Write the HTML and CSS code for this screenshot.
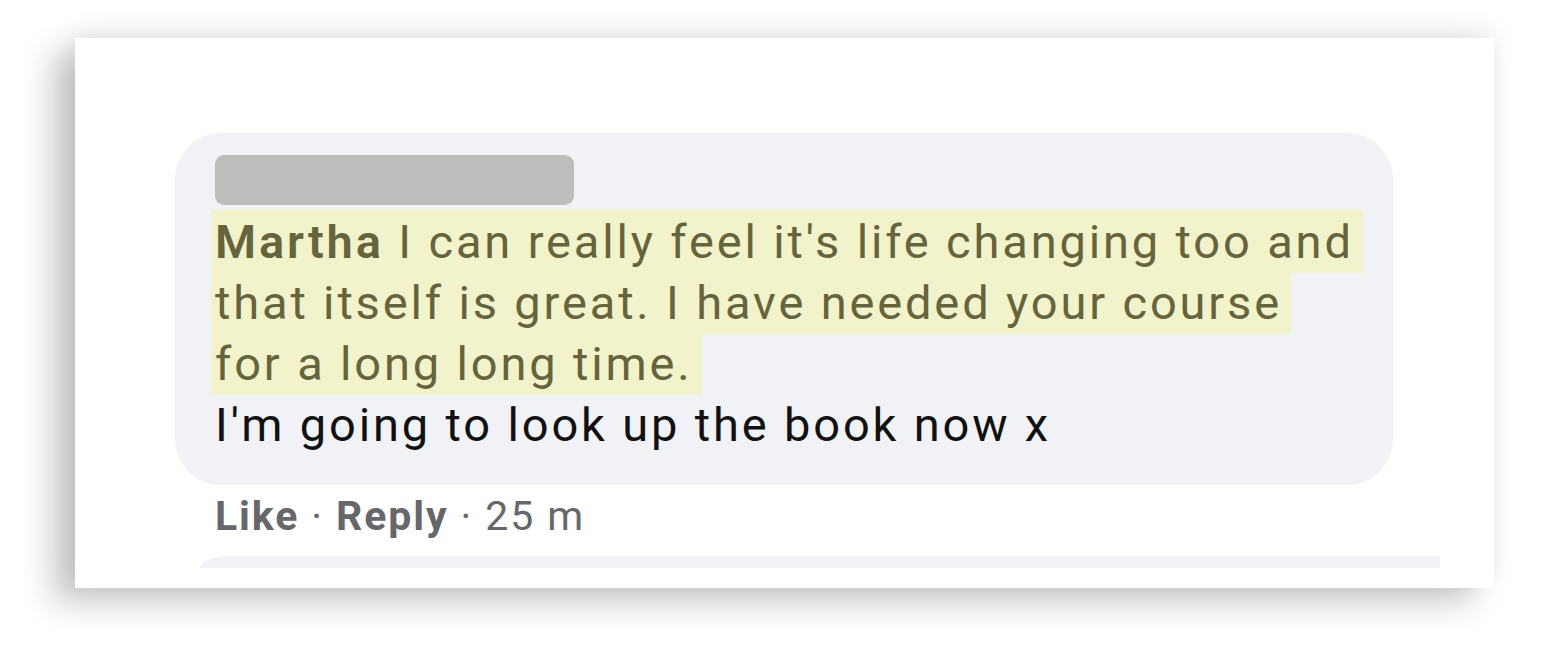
FILE: index.html
```html
<!DOCTYPE html>
<html>
<head>
<meta charset="utf-8">
<link rel="stylesheet" href="styles.css">
</head>
<body>
<div class="page">
  <div class="card">
    <div class="bubble">
      <div class="name-bar"></div>
      <p class="text"><span class="hl"><b>Martha</b> I can really feel it's life changing too and<br>that itself is great. I have needed your course<br>for a long long time.</span><br>I'm going to look up the book now x</p>
    </div>
    <div class="actions"><b>Like</b> · <b>Reply</b> · 25 m</div>
    <div class="next-bubble"></div>
  </div>
</div>
</body>
</html>
```
FILE: styles.css
```css
html, body {
  margin: 0;
  padding: 0;
  background: #ffffff;
}
.page {
  width: 1548px;
  height: 658px;
  padding: 38px 0 0 75px;
  box-sizing: border-box;
  overflow: hidden;
}
.card {
  width: 1419px;
  height: 550px;
  background: #ffffff;
  box-shadow: -22px 14px 30px rgba(0,0,0,0.22), 0 -8px 24px rgba(0,0,0,0.08);
  padding: 95px 0 0 100px;
  box-sizing: border-box;
  font-family: Roboto, "Liberation Sans", sans-serif;
}
.bubble {
  width: 1218px;
  height: 352px;
  box-sizing: border-box;
  background: #f0f2f5;
  border-radius: 46px;
  padding: 22px 0 0 40px;
}
.name-bar {
  width: 359px;
  height: 50px;
  background: #bdbdbd;
  border-radius: 9px;
}
.text {
  margin: 6px 0 0 0;
  font-size: 47px;
  line-height: 61px;
  letter-spacing: 2.85px;
  color: #111111;
}
.hl {
  background: #f2f2cb;
  color: #66643c;
  padding: 4px 9px 4px 4px;
  margin-left: -4px;
  -webkit-box-decoration-break: clone;
  box-decoration-break: clone;
}
.hl b {
  font-weight: 600;
}
.actions {
  margin: 7px 0 0 40px;
  font-size: 41px;
  letter-spacing: 1.9px;
  color: #65676b;
}
.actions b {
  font-weight: 700;
}
.next-bubble {
  margin: 16px 0 0 25px;
  width: 1240px;
  height: 12px;
  background: #f0f2f5;
  border-top-left-radius: 30px 12px;
}
```
